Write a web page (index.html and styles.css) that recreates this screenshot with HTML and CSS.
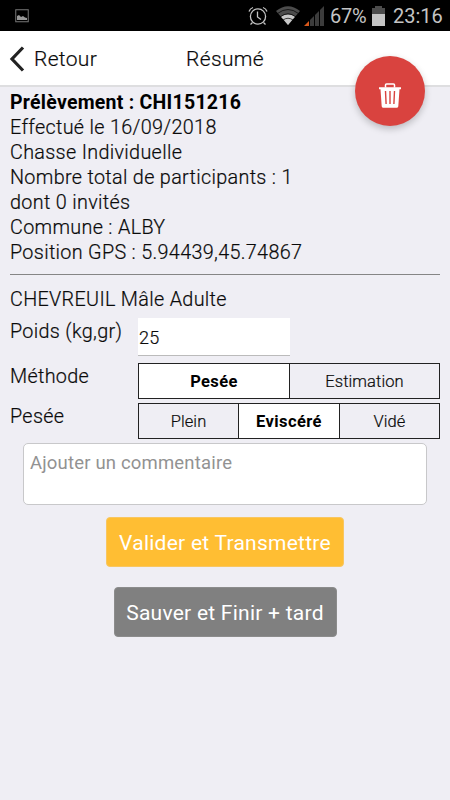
FILE: index.html
```html
<!DOCTYPE html>
<html lang="fr">
<head>
<meta charset="utf-8">
<title>Résumé</title>
<link rel="stylesheet" href="styles.css">
</head>
<body>
<div class="status">
  <svg class="status-picture" width="14" height="14" viewBox="0 0 14 14"><rect x=".75" y=".75" width="12.5" height="12" fill="none" stroke="#777"/><path d="M2 11V7l2-1 2 2 2-1 2 1.500 2 .5v2z" fill="#999"/></svg>
  <svg class="status-alarm" width="20" height="20" viewBox="0 0 20 20" fill="none" stroke="#c4c4c4" stroke-width="1.300"><circle cx="10" cy="10.500" r="7.600"/><path d="M9.500 5.500v5.500l3.500 2.500M1 5.500Q2 2.500 5 1.500M19 5.500Q18 2.500 15 1.500M4.500 16.500l-2 2M15.500 16.500l2 2"/></svg>
  <svg class="status-wifi" width="24" height="19" viewBox="0 0 24 19"><path d="M0 5Q12-4.500 24 5L12 19z" fill="#4c4c4c"/><path d="M5 10.800Q12 6 19 10.800L12 19z" fill="#c8c8c8"/><path d="M1.500 7.500Q12-.5 22.500 7.500M4 11Q12 4.500 20 11M7 14Q12 10.500 17 14" fill="none" stroke="#000" stroke-width=".7"/></svg>
  <svg class="status-signal" width="20" height="20" viewBox="0 0 20 20"><path d="M0 20l5-5v5z" fill="#d9581b"/><path d="M6 14l4-4v10H6zM11 9l4-4v15h-4zM16 4l4-4v20h-4z" fill="#3c3c3c"/></svg>
  <span class="status-percent">67%</span>
  <svg class="status-battery" width="13" height="20" viewBox="0 0 13 20"><path d="M3 0h7v2h3v18H0V2h3z" fill="#4c4c4c"/><path d="M0 8h13v12H0z" fill="#c4c4c4"/></svg>
  <span class="status-time">23:16</span>
</div>
<header class="bar">
  <svg class="back-icon" width="16" height="26" viewBox="0 0 16 26"><path d="M14 1.500L3 13l11 11.500" fill="none" stroke="#222" stroke-width="3.200"/></svg>
  <span class="back">Retour</span>
  <h1 class="title">Résumé</h1>
  <button class="delete" aria-label="Supprimer"><svg width="22" height="25" viewBox="0 0 22 25"><path d="M6.500 4.500V2Q6.500 1 7.500 1h7Q15.500 1 15.500 2v2.500" fill="none" stroke="#fff" stroke-width="1.500"/><path fill="#fff" fill-rule="evenodd" d="M0 4.300h22v2h-1.500l-1.200 17Q19.200 24.700 18 24.700H4Q2.800 24.700 2.700 23.300L1.500 6.300H0zM5.800 8l.6 13h1.400L7.200 8zM10.300 8v13h1.400V8zM14.800 8l-.6 13h1.400l.6-13z"/></svg></button>
</header>
<main class="content">
  <div class="line"><b>Prélèvement : CHI151216</b></div>
  <div class="line">Effectué le 16/09/2018</div>
  <div class="line">Chasse Individuelle</div>
  <div class="line">Nombre total de participants : 1</div>
  <div class="line">dont 0 invités</div>
  <div class="line">Commune : ALBY</div>
  <div class="line">Position GPS : 5.94439,45.74867</div>
  <div class="rule"></div>
  <div class="line">CHEVREUIL Mâle Adulte</div>
  <div class="row row-weight"><span class="label">Poids (kg,gr)</span><div class="weight">25</div></div>
  <div class="row"><span class="label">Méthode</span><div class="segments two"><div class="segment active">Pesée</div><div class="segment">Estimation</div></div></div>
  <div class="row"><span class="label">Pesée</span><div class="segments three"><div class="segment">Plein</div><div class="segment active">Eviscéré</div><div class="segment">Vidé</div></div></div>
  <div class="comment">Ajouter un commentaire</div>
  <button class="button send">Valider et Transmettre</button>
  <button class="button save">Sauver et Finir + tard</button>
</main>
</body>
</html>
```
FILE: styles.css
```css
* { box-sizing: border-box; }
body {
  margin: 0;
  height: 800px;
  overflow: hidden;
  background: #efeef4;
  color: #0a0a0a;
  font-family: Roboto, sans-serif;
  font-size: 19.8px;
  font-weight: 300;
  letter-spacing: .32px;
  -webkit-text-stroke: .2px;
}
.status {
  height: 31px;
  display: flex;
  align-items: center;
  background: #000;
  color: #c4c4c4;
  font-size: 20px;
  font-weight: 400;
  letter-spacing: 0;
  -webkit-text-stroke: 0;
}
.status-picture { margin-left: 15px; }
.status-alarm { margin-left: 219px; }
.status-wifi { margin-left: 8px; }
.status-signal { margin-left: 4px; }
.status-percent { margin-left: 6px; width: 37px; white-space: nowrap; letter-spacing: -.2px; }
.status-battery { margin-left: 5px; }
.status-time { margin-left: 8px; }
.bar {
  position: relative;
  height: 56px;
  display: flex;
  align-items: center;
  background: #fff;
  border-bottom: 2px solid #dedee0;
}
.back-icon { margin-left: 9px; margin-top: 2px; }
.back { margin-left: 9px; font-size: 21px; padding-top: 1px; }
.title {
  position: absolute;
  left: 0;
  right: 0;
  margin: 0;
  padding-top: 1px;
  text-align: center;
  font-size: 21px;
  font-weight: 300;
}
.delete {
  position: absolute;
  top: 25px;
  right: 25px;
  width: 70px;
  height: 70px;
  padding: 9px 0 0;
  display: flex;
  align-items: center;
  justify-content: center;
  border: 0;
  border-radius: 50%;
  background: #d9433f;
  box-shadow: 0 3px 7px rgba(0, 0, 0, .22);
}
.content {
  padding: 3px 10px 0;
  display: flex;
  flex-direction: column;
}
.line { height: 25px; line-height: 25px; white-space: nowrap; }
.line b { font-weight: 700; color: #000; font-size: 19.5px; letter-spacing: .25px; -webkit-text-stroke: 0; }
.rule { height: 1px; background: #858585; margin: 9px 0 12px; }
.row {
  display: flex;
  height: 40px;
}
.row-weight { height: 50px; margin-top: 1px; }
.row-weight .label { padding-top: 6px; }
.label { width: 128px; line-height: 25px; padding-top: 1px; }
.weight {
  margin-top: 5px;
  width: 152px;
  height: 38px;
  line-height: 39px;
  padding-left: 1px;
  background: #fff;
  border-bottom: 1px solid #bbb;
  font-size: 18px;
}
.segments {
  display: grid;
  flex: 1;
  height: 36px;
  border: 1px solid #222;
  font-size: 16.500px;
}
.two { grid-template-columns: 150px 1fr; }
.three { grid-template-columns: 99px 101px 1fr; }
.segment {
  height: 34px;
  line-height: 36px;
  text-align: center;
  letter-spacing: .1px;
}
.segment + .segment { border-left: 1px solid #222; }
.active { background: #fff; color: #000; font-weight: 700; letter-spacing: .4px; -webkit-text-stroke: 0; }
.comment {
  margin: 0 13px;
  height: 62px;
  padding: 6px;
  border: 1px solid #c8c8ca;
  border-radius: 5px;
  background: #fff;
  color: #929292;
  font-size: 18.500px;
  font-weight: 400;
  line-height: 26px;
  letter-spacing: .18px;
  -webkit-text-stroke: 0;
}
.button {
  align-self: center;
  height: 50px;
  padding: 1px 0 0;
  border: 1px solid;
  border-radius: 4px;
  color: #fff;
  font: 400 21px Roboto, sans-serif;
  letter-spacing: .25px;
  -webkit-text-stroke: 0;
}
.send { width: 238px; margin-top: 12px; background: #ffbe33; border-color: #f8c660; }
.save { width: 223px; margin-top: 20px; background: #808080; border-color: #8c8c8c; }
```
